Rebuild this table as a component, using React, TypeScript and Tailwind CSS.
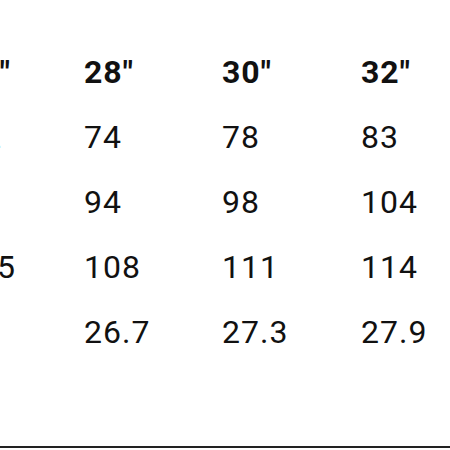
const header = ['26"', '28"', '30"', '32"'];

const rows = [
  ["72", "74", "78", "83"],
  ["", "94", "98", "104"],
  ["105", "108", "111", "114"],
  ["", "26.7", "27.3", "27.9"],
];

// left column is cut off by the crop; shift each cell so only its tail shows
const firstShift = ["ml-[14px]", "ml-[17px]", "", "ml-[12px]", ""];

export default function App() {
  return (
    <div className="w-[450px] h-[450px] bg-white overflow-hidden flex flex-col text-[#111]" style={{ fontFamily: "Roboto, 'Noto Sans', sans-serif" }}>
      <div className="flex-1 pt-[40px]">
        <div className="ml-[-53px] grid grid-cols-[137px_138px_139px_139px] text-[32px] leading-[65px] tracking-[1px] whitespace-nowrap">
          {header.map((h, i) => (
            <div key={h} className={`font-bold ${i === 0 ? firstShift[0] : ""}`}>{h}</div>
          ))}
          {rows.map((r, ri) =>
            r.map((c, ci) => (
              <div key={ri + "-" + ci} className={ci === 0 ? firstShift[ri + 1] : ""}>{c}</div>
            ))
          )}
        </div>
      </div>
      <div className="h-[2px] bg-[#222] mb-[2px]" />
    </div>
  );
}
